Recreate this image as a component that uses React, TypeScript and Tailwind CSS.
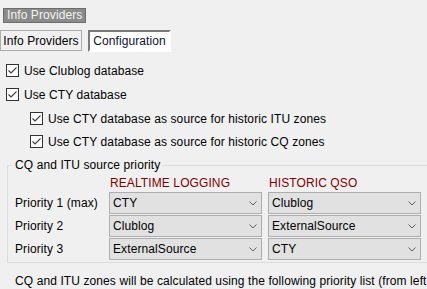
function Check() {
  return (
    <span className="flex h-[13px] w-[13px] shrink-0 items-center justify-center border border-[#333333] bg-white">
      <svg width="11" height="11" viewBox="0 0 11 11">
        <path d="M1.5 5.5 L4 8 L9.5 2.5" fill="none" stroke="#3c3c3c" strokeWidth="1.1" />
      </svg>
    </span>
  );
}

function CheckRow({ label, indent, className }: { label: string; indent?: boolean; className: string }) {
  return (
    <div className={`flex h-[13px] items-center ${indent ? 'pl-[30px]' : 'pl-[6px]'} ${className}`}>
      <Check />
      <span className="ml-[5px] whitespace-nowrap">{label}</span>
    </div>
  );
}

function Combo({ value }: { value: string }) {
  return (
    <div className="flex h-[22px] items-center justify-between border border-[#adadad] bg-[#e1e1e1] pl-[3px] pr-[4px]">
      <span className="whitespace-nowrap">{value}</span>
      <svg width="8" height="5" viewBox="0 0 8 5">
        <path d="M0.5 0.5 L4 4 L7.5 0.5" fill="none" stroke="#606060" strokeWidth="1" />
      </svg>
    </div>
  );
}

const rows = [
  { label: 'Priority 1 (max)', realtime: 'CTY', historic: 'Clublog' },
  { label: 'Priority 2', realtime: 'Clublog', historic: 'ExternalSource' },
  { label: 'Priority 3', realtime: 'ExternalSource', historic: 'CTY' },
];

export default function App() {
  return (
    <div className="h-[289px] w-[427px] overflow-hidden bg-[#f0f0f0] font-['Liberation_Sans',Arial,sans-serif] text-[12px] leading-[16px] tracking-[0.1px] text-black">
      <div className="pl-[3px] pt-[7px]">
        <div className="inline-flex h-[15px] items-center border border-[#6d6d6d] bg-[#8b8b8b] px-[3px] text-[#f4f4f4]">
          Info Providers
        </div>
      </div>

      <div className="mt-[7px] flex items-start gap-[6px]">
        <div className="flex h-[21px] w-[82px] items-center justify-center border border-[#adadad] bg-[#f0f0f0]">
          Info Providers
        </div>
        <div className="flex h-[22px] w-[83px] items-center justify-center border-2 border-b-white border-l-[#7a7a7a] border-r-white border-t-[#7a7a7a] bg-white text-[#101030]">
          Configuration
        </div>
      </div>

      <CheckRow className="mt-[12px]" label="Use Clublog database" />
      <CheckRow className="mt-[11px]" label="Use CTY database" />
      <CheckRow className="mt-[11px]" indent label="Use CTY database as source for historic ITU zones" />
      <CheckRow className="mt-[10px]" indent label="Use CTY database as source for historic CQ zones" />

      <div className="relative ml-[7px] mt-[17px] h-[98px] w-[440px] border border-[#dcdcdc]">
        <span className="absolute left-[5px] top-[-9px] bg-[#f0f0f0] px-[2px]">CQ and ITU source priority</span>
        <div className="grid grid-cols-[88px_153px_153px] gap-x-[6px] gap-y-[1px] pl-[7px] pt-[9px]">
          <div />
          <div className="pl-[1px] text-[#800000]">REALTIME LOGGING</div>
          <div className="pl-[1px] text-[#800000]">HISTORIC QSO</div>
          {rows.map((r) => (
            <div key={r.label} className="contents">
              <div className="flex items-center whitespace-nowrap">{r.label}</div>
              <Combo value={r.realtime} />
              <Combo value={r.historic} />
            </div>
          ))}
        </div>
      </div>

      <div className="mt-[10px] whitespace-nowrap pl-[15px]">
        CQ and ITU zones will be calculated using the following priority list (from left to right)
      </div>
    </div>
  );
}
